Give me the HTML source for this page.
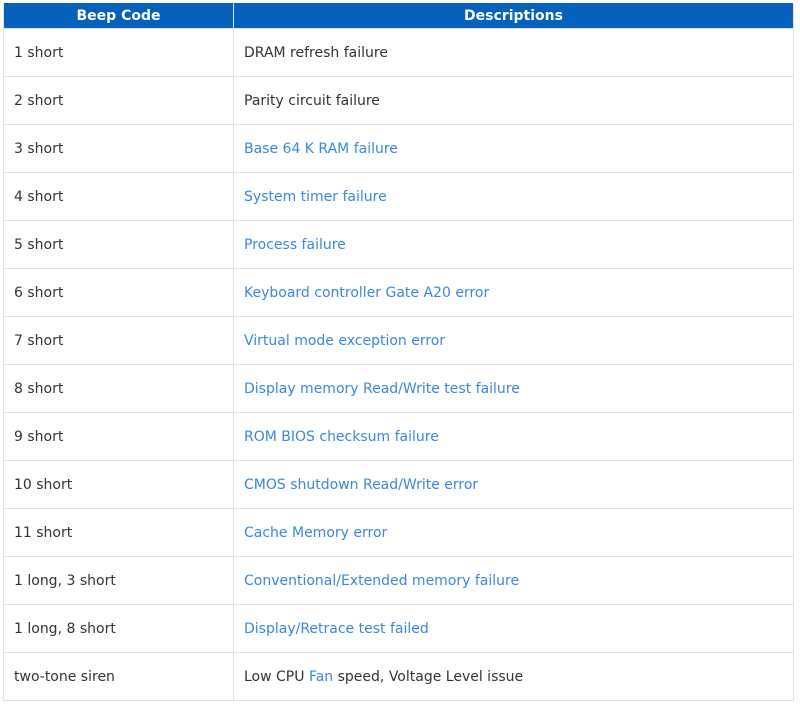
<!DOCTYPE html>
<html><head><style>
body{margin:0;background:#fff;width:800px;height:709px;overflow:hidden;font-family:"DejaVu Sans","Liberation Sans",sans-serif;}
table{position:absolute;left:3px;top:3px;width:791px;border-collapse:collapse;font-size:14px;}
th{background:#0561bb;color:#fff;font-weight:bold;height:25px;padding:0;border:1px solid #e2e2e2;border-top:none;font-size:14px;}
td{height:47px;padding:0 0 0 10px;border:1px solid #e2e2e2;color:#333;}
td.c1{width:219px;}
a,.l{color:#3a88dd;}
</style></head><body>
<table>
<tr><th>Beep Code</th><th>Descriptions</th></tr>
<tr><td class="c1">1 short</td><td>DRAM refresh failure</td></tr>
<tr><td class="c1">2 short</td><td>Parity circuit failure</td></tr>
<tr><td class="c1">3 short</td><td class="l">Base 64 K RAM failure</td></tr>
<tr><td class="c1">4 short</td><td class="l">System timer failure</td></tr>
<tr><td class="c1">5 short</td><td class="l">Process failure</td></tr>
<tr><td class="c1">6 short</td><td class="l">Keyboard controller Gate A20 error</td></tr>
<tr><td class="c1">7 short</td><td class="l">Virtual mode exception error</td></tr>
<tr><td class="c1">8 short</td><td class="l">Display memory Read/Write test failure</td></tr>
<tr><td class="c1">9 short</td><td class="l">ROM BIOS checksum failure</td></tr>
<tr><td class="c1">10 short</td><td class="l">CMOS shutdown Read/Write error</td></tr>
<tr><td class="c1">11 short</td><td class="l">Cache Memory error</td></tr>
<tr><td class="c1">1 long, 3 short</td><td class="l">Conventional/Extended memory failure</td></tr>
<tr><td class="c1">1 long, 8 short</td><td class="l">Display/Retrace test failed</td></tr>
<tr><td class="c1">two-tone siren</td><td>Low CPU <span class="l">Fan</span> speed, Voltage Level issue</td></tr>
</table>
</body></html>
